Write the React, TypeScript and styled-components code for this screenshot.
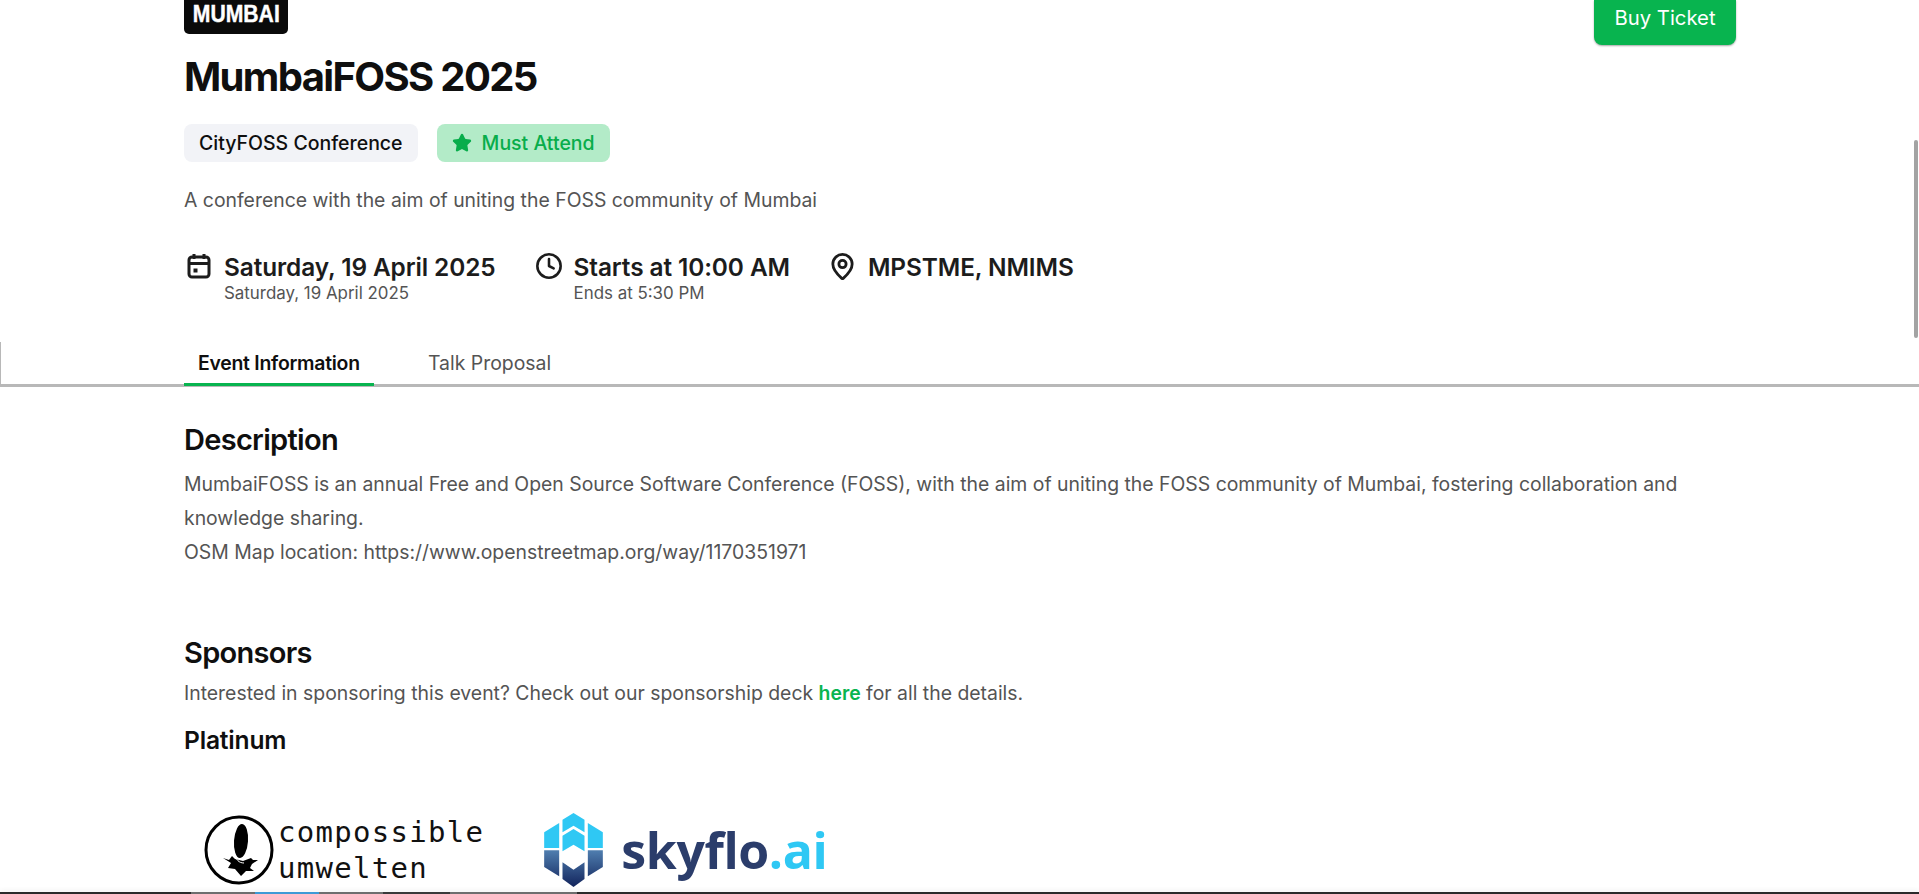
import styled, { createGlobalStyle } from 'styled-components';
import { Clock, MapPin, Star } from 'lucide-react';

const GlobalStyle = createGlobalStyle`
  html, body {
    margin: 0;
    height: 100%;
    overflow: hidden;
    background: #fff;
  }
  body {
    font-family: Inter, "Liberation Sans", sans-serif;
    color: #0f0f0f;
  }
`;

const Viewport = styled.div`
  position: relative;
  height: 894px;
  overflow: hidden;
`;

const Scrollbar = styled.div`
  position: absolute;
  top: 140px;
  right: 1px;
  width: 4px;
  height: 198px;
  border-radius: 2px;
  background: #a3a3a3;
`;

const TaskStrip = styled.div`
  position: absolute;
  left: 0;
  right: 0;
  bottom: 0;
  height: 2px;
  display: flex;
  background: #2b2b2b;
  box-shadow: 0 -2px 4px rgba(0, 0, 0, 0.07);
`;

const TaskSegment = styled.div<{ $color: string; $width: number }>`
  width: ${(p) => p.$width}px;
  background: ${(p) => p.$color};
`;

const Container = styled.div`
  width: 1552px;
  margin-left: 184px;
`;

const TopRow = styled.div`
  display: flex;
  justify-content: space-between;
  align-items: flex-start;
`;

const LogoBox = styled.div`
  width: 104px;
  height: 34px;
  padding-top: 1px;
  box-sizing: border-box;
  background: #0a0a0a;
  border-radius: 0 0 5px 5px;
  display: flex;
  justify-content: center;
  align-items: flex-start;
  overflow: hidden;
`;

const LogoText = styled.span`
  font-family: "Liberation Sans", sans-serif;
  font-weight: 700;
  font-size: 23px;
  line-height: 26px;
  color: #fff;
  -webkit-text-stroke: 0.4px #fff;
  transform: scaleX(0.92);
`;

const BuyButton = styled.button`
  width: 142px;
  height: 45px;
  padding: 0 0 10px;
  border: 0;
  border-radius: 0 0 8px 8px;
  background: #08b44f;
  box-shadow: 0 1px 2px rgba(0, 0, 0, 0.35);
  color: #fff;
  font: 400 20.3px/26px Inter, sans-serif;
`;

const Title = styled.h1`
  margin: 9px 0 0;
  font-size: 40px;
  line-height: 46px;
  font-weight: 700;
  letter-spacing: -1.65px;
`;

const BadgeRow = styled.div`
  display: flex;
  gap: 19px;
  margin-top: 24px;
`;

const Badge = styled.div<{ $accent?: boolean }>`
  height: 38px;
  padding: 0 15px;
  display: flex;
  align-items: center;
  gap: 10px;
  border-radius: 8px;
  font-size: 19.5px;
  font-weight: 500;
  background: ${(p) => (p.$accent ? '#b3ebc8' : '#f2f3f7')};
  color: ${(p) => (p.$accent ? '#08ad4b' : '#0f0f0f')};
`;

const Summary = styled.p`
  margin: 24px 0 0;
  font-size: 19.4px;
  line-height: 28px;
  color: #545454;
`;

const MetaRow = styled.div`
  display: flex;
  gap: 38px;
  margin-top: 37px;
`;

const MetaItem = styled.div`
  display: flex;
  gap: 10px;
  color: #1c1c1c;
`;

const MetaIcon = styled.div`
  width: 30px;
  height: 30px;
  display: flex;
  justify-content: center;
  align-items: center;
  svg {
    display: block;
  }
`;

const MetaMain = styled.div`
  font-size: 24.4px;
  line-height: 32px;
  font-weight: 600;
  letter-spacing: -0.1px;
`;

const MetaSub = styled.div`
  font-size: 16.9px;
  line-height: 20px;
  color: #545454;
`;

const TabBar = styled.div`
  margin-top: 39px;
  height: 42px;
  border-left: 1px solid #b8b8b8;
  border-bottom: 3px solid #b8b8b8;
`;

const TabInner = styled.div`
  width: 1552px;
  margin-left: 183px;
  display: flex;
`;

const Tab = styled.div<{ $active?: boolean; $width: number }>`
  width: ${(p) => p.$width}px;
  box-sizing: border-box;
  padding-left: ${(p) => (p.$active ? 14 : 0)}px;
  margin-right: ${(p) => (p.$active ? 54 : 0)}px;
  height: 44px;
  line-height: 43px;
  font-size: 19.4px;
  font-weight: ${(p) => (p.$active ? 600 : 400)};
  letter-spacing: ${(p) => (p.$active ? '-0.25px' : '0')};
  color: ${(p) => (p.$active ? '#0f0f0f' : '#545454')};
  border-bottom: 3px solid ${(p) => (p.$active ? '#08b44f' : 'transparent')};
`;

const SectionTitle = styled.h2<{ $top: number }>`
  margin: ${(p) => p.$top}px 0 0;
  font-size: 29px;
  line-height: 36px;
  font-weight: 600;
  letter-spacing: -0.7px;
`;

const Paragraph = styled.p`
  margin: 9px 0 0;
  font-size: 19.4px;
  line-height: 34px;
  color: #545454;
`;

const SponsorNote = styled.p`
  margin: 8px 0 0;
  font-size: 19.4px;
  line-height: 28px;
  color: #545454;
`;

const Highlight = styled.span`
  color: #08b44f;
  font-weight: 600;
`;

const TierTitle = styled.h3`
  margin: 17px 0 0;
  font-size: 24.6px;
  line-height: 32px;
  font-weight: 600;
  letter-spacing: -0.2px;
`;

const SponsorRow = styled.div`
  display: flex;
  align-items: center;
  gap: 60px;
  margin-top: 57px;
  padding-left: 20px;
`;

const SponsorLogo = styled.div`
  display: flex;
  align-items: center;
  flex: none;
`;

const MonoStack = styled.div`
  margin-left: 4px;
  font-family: "DejaVu Sans Mono", monospace;
  font-size: 29px;
  line-height: 36px;
  letter-spacing: 1.3px;
  color: #111;
`;

const SkyWord = styled.span`
  margin-left: 18px;
  font-family: "Open Sans", sans-serif;
  font-weight: 700;
  font-size: 50px;
  line-height: 60px;
  letter-spacing: -0.4px;
  color: #2b3d6b;
`;

const SkySuffix = styled.span`
  color: #2fc8f4;
`;

const CalendarIcon = () => (
  <svg width="30" height="30" viewBox="0 0 30 30" fill="none" stroke="currentColor" strokeWidth="3">
    <rect x="5" y="6" width="20" height="20" rx="3" />
    <path d="M5 12.5h20M10 3v5M20 3v5" />
    <rect x="9.5" y="17.5" width="4" height="4" fill="currentColor" stroke="none" />
  </svg>
);

const CompossibleMark = () => (
  <svg width="70" height="70" viewBox="0 0 70 70">
    <circle cx="35" cy="35" r="33" fill="#fff" stroke="#000" strokeWidth="3" />
    <ellipse cx="37" cy="26" rx="7" ry="17" fill="#000" transform="rotate(4 37 26)" />
    <path d="M19 43l6 2 3-4 3 3 8 2 8-3 2 2 5 0-6 4-2 4 4 3-8 0-5 5-6-7-7-1 3-5z" fill="#000" />
    <path d="M24 38c3-5 5-3 6 0 2 7 5 10 10 10" fill="none" stroke="#fff" strokeWidth="1" />
  </svg>
);

const SkyfloMark = () => (
  <svg width="59" height="74" viewBox="12 10 176 222">
    <defs>
      <linearGradient id="skyBlue" x1="0" y1="122" x2="0" y2="232" gradientUnits="userSpaceOnUse">
        <stop offset="0" stopColor="#4f7eaf" />
        <stop offset="1" stopColor="#12245c" />
      </linearGradient>
    </defs>
    <path d="M100 10l33 20v38l-33-20-33 20V30z" fill="#2fc8f4" />
    <path d="M100 58l33 20v47l-33-20-33 20V78z" fill="#2fc8f4" />
    <path d="M57 40v75H12V68z" fill="#2fc8f4" />
    <path d="M143 40v75h45V68z" fill="#2fc8f4" />
    <path d="M12 122h45v78l-45-28z" fill="url(#skyBlue)" />
    <path d="M188 122h-45v78l45-28z" fill="url(#skyBlue)" />
    <path d="M67 158l33 22 33-22v50l-33 24-33-24z" fill="url(#skyBlue)" />
  </svg>
);

export default function App() {
  return (
    <Viewport>
      <GlobalStyle />
      <Container>
        <TopRow>
          <LogoBox>
            <LogoText>MUMBAI</LogoText>
          </LogoBox>
          <BuyButton>Buy Ticket</BuyButton>
        </TopRow>
        <Title>MumbaiFOSS 2025</Title>
        <BadgeRow>
          <Badge>CityFOSS Conference</Badge>
          <Badge $accent>
            <Star size={20} fill="currentColor" strokeWidth={2} />
            Must Attend
          </Badge>
        </BadgeRow>
        <Summary>A conference with the aim of uniting the FOSS community of Mumbai</Summary>
        <MetaRow>
          <MetaItem>
            <MetaIcon>
              <CalendarIcon />
            </MetaIcon>
            <div>
              <MetaMain>Saturday, 19 April 2025</MetaMain>
              <MetaSub>Saturday, 19 April 2025</MetaSub>
            </div>
          </MetaItem>
          <MetaItem>
            <MetaIcon>
              <Clock size={28} strokeWidth={2.2} />
            </MetaIcon>
            <div>
              <MetaMain>Starts at 10:00 AM</MetaMain>
              <MetaSub>Ends at 5:30 PM</MetaSub>
            </div>
          </MetaItem>
          <MetaItem>
            <MetaIcon>
              <MapPin size={29} strokeWidth={2.3} />
            </MetaIcon>
            <div>
              <MetaMain>MPSTME, NMIMS</MetaMain>
            </div>
          </MetaItem>
        </MetaRow>
      </Container>
      <TabBar>
        <TabInner>
          <Tab $active $width={190}>Event Information</Tab>
          <Tab $width={140}>Talk Proposal</Tab>
        </TabInner>
      </TabBar>
      <Container>
        <SectionTitle $top={35}>Description</SectionTitle>
        <Paragraph>
          MumbaiFOSS is an annual Free and Open Source Software Conference (FOSS), with the aim of uniting the FOSS community of Mumbai, fostering collaboration and knowledge sharing.
          <br />
          OSM Map location: https://www.openstreetmap.org/way/1170351971
        </Paragraph>
        <SectionTitle $top={66}>Sponsors</SectionTitle>
        <SponsorNote>
          Interested in sponsoring this event? Check out our sponsorship deck <Highlight>here</Highlight> for all the details.
        </SponsorNote>
        <TierTitle>Platinum</TierTitle>
        <SponsorRow>
          <SponsorLogo>
            <CompossibleMark />
            <MonoStack>
              compossible
              <br />
              umwelten
            </MonoStack>
          </SponsorLogo>
          <SponsorLogo>
            <SkyfloMark />
            <SkyWord>
              skyflo<SkySuffix>.ai</SkySuffix>
            </SkyWord>
          </SponsorLogo>
        </SponsorRow>
      </Container>
      <Scrollbar />
      <TaskStrip>
        <TaskSegment $color="#2b2b2b" $width={191} />
        <TaskSegment $color="#6e6e6e" $width={64} />
        <TaskSegment $color="#3d9ad6" $width={64} />
        <TaskSegment $color="#6e6e6e" $width={64} />
        <TaskSegment $color="#3a3a3a" $width={67} />
        <TaskSegment $color="#6e6e6e" $width={64} />
        <TaskSegment $color="#6e6e6e" $width={63} />
      </TaskStrip>
    </Viewport>
  );
}
